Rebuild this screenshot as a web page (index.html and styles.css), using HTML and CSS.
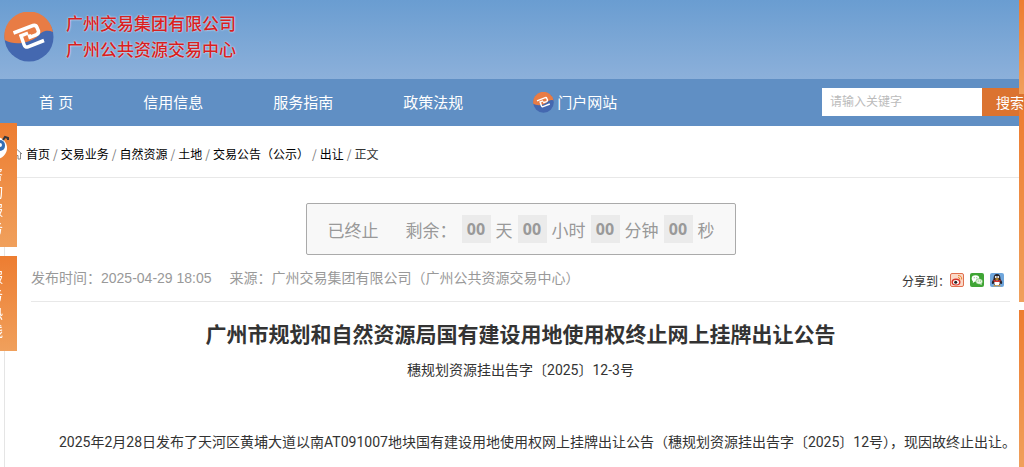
FILE: index.html
```html
<!DOCTYPE html>
<html lang="zh-CN">
<head>
  <meta charset="UTF-8">
  <meta name="viewport" content="width=device-width, initial-scale=1.0">
  <title>广州公共资源交易中心</title>
  <link rel="stylesheet" href="styles.css">
</head>
<body>
  <svg class="sprite" aria-hidden="true">
    <symbol id="logo" viewBox="0 0 50 50">
      <circle cx="25" cy="25" r="24.5" fill="#4468b0"/>
      <path d="M.6 28A24.5 24.5 0 0 1 49 20C42 17 37 20 33 25 25 31 11 34 .6 28Z" fill="#e87c45"/>
      <path d="M9.500 21L29 13.500Q32 12.800 33 15.500L34.500 19Q35 21.500 32 22.800L26 25.200 25 22.500" fill="none" stroke="#fff" stroke-width="3.500"/>
      <path d="M24 21L17 23.800 20 32.500Q21 35.800 24 34.800L40 28.500" fill="none" stroke="#fff" stroke-width="3.500"/>
    </symbol>
  </svg>

  <header class="header">
    <svg class="logo"><use href="#logo"/></svg>
    <div class="logo-text">
      <div>广州交易集团有限公司</div>
      <div>广州公共资源交易中心</div>
    </div>
  </header>

  <nav class="nav">
    <a href="#">首 页</a>
    <a href="#">信用信息</a>
    <a href="#">服务指南</a>
    <a href="#">政策法规</a>
    <a href="#"><svg class="nav-logo"><use href="#logo"/></svg>门户网站</a>
    <form class="search">
      <input type="text" placeholder="请输入关键字" aria-label="请输入关键字">
      <button type="button">搜索</button>
    </form>
  </nav>

  <main class="main">
    <div class="crumbs">
      <svg class="home" viewBox="0 0 12 12"><path d="M1 6L6 1.500 11 6M2.500 5V11H5V7.500H7V11H9.500V5" fill="none" stroke="#888"/></svg>
      <a href="#">首页</a> / <a href="#">交易业务</a> / <a href="#">自然资源</a> / <a href="#">土地</a> / <a href="#">交易公告（公示）</a> / <a href="#">出让</a> / <span>正文</span>
    </div>

    <article class="article">
      <div class="countdown">
        <span class="state">已终止</span>
        <span>剩余：</span>
        <b>00</b> 天 <b>00</b> 小时 <b>00</b> 分钟 <b>00</b> 秒
      </div>

      <div class="meta">
        <span>发布时间：2025-04-29 18:05</span>
        <span>来源：广州交易集团有限公司（广州公共资源交易中心）</span>
        <div class="share">
          <span>分享到：</span>
          <a href="#" aria-label="微博"><svg viewBox="0 0 14 14">
            <rect x=".5" y=".5" width="13" height="13" rx="1.500" fill="#fbd9c8" stroke="#e0704f"/>
            <ellipse cx="6" cy="9" rx="4.500" ry="3.500" fill="#d8342b"/>
            <ellipse cx="6" cy="9.200" rx="3" ry="2.200" fill="#fff"/>
            <circle cx="5.700" cy="9.300" r="1.500" fill="#222"/>
            <path d="M8 2.500Q12 2.500 11.700 6.500M8 4.500Q10 4.500 9.800 6.500" fill="none" stroke="#e8822b"/>
          </svg></a>
          <a href="#" aria-label="微信"><svg viewBox="0 0 14 14">
            <rect width="14" height="14" rx="2" fill="#3fa535"/>
            <ellipse cx="5.500" cy="5.500" rx="3.800" ry="3.200" fill="#fff"/>
            <path d="M3 7.500L2.800 10 5 8.500Z" fill="#fff"/>
            <ellipse cx="9.200" cy="8.500" rx="3.400" ry="2.800" fill="#e9f7e4" stroke="#3fa535" stroke-width=".5"/>
            <path d="M10 11L11.500 12.200V10Z" fill="#e9f7e4"/>
            <g fill="#3fa535"><circle cx="4.200" cy="4.800" r=".5"/><circle cx="6.800" cy="4.800" r=".5"/><circle cx="8.200" cy="8" r=".5"/><circle cx="10.300" cy="8" r=".5"/></g>
          </svg></a>
          <a href="#" aria-label="QQ"><svg viewBox="0 0 14 14">
            <rect width="14" height="14" rx="2" fill="#6fa6dc"/>
            <path d="M3.500 6Q3.500 1 7 1T10.500 6Q12.500 8.500 12 11L10.500 10.500 9.500 12.500H4.500L3.500 10.500 2 11Q1.500 8.500 3.500 6Z" fill="#26222a"/>
            <ellipse cx="7" cy="10" rx="2.700" ry="2.500" fill="#fff"/>
            <path d="M3.500 6.500Q7 9 10.500 6.500V8.200Q7 10 3.500 8.200Z" fill="#e2352b"/>
            <circle cx="5.800" cy="4" r="1" fill="#fff"/><circle cx="8.200" cy="4" r="1" fill="#fff"/>
            <ellipse cx="7" cy="6" rx="2" ry=".8" fill="#f5a623"/>
            <path d="M3.500 12.800H6.500M7.500 12.800H10.500" stroke="#f5a623"/>
          </svg></a>
        </div>
      </div>

      <h1>广州市规划和自然资源局国有建设用地使用权终止网上挂牌出让公告</h1>
      <p class="number">穗规划资源挂出告字〔2025〕12-3号</p>
      <p class="text">2025年2月28日发布了天河区黄埔大道以南AT091007地块国有建设用地使用权网上挂牌出让公告（穗规划资源挂出告字〔2025〕12号），现因故终止出让。</p>
    </article>
  </main>

  <!-- floating service tabs on both edges -->
  <aside class="side side-left">
    <a href="#" class="tab tab-robot">
      <svg viewBox="0 0 28 24">
        <circle cx="14" cy="13" r="11" fill="#fff"/>
        <rect x="7" y="5" width="16" height="11" rx="5" fill="#356fb5"/>
        <circle cx="18" cy="10" r="2" fill="#fff"/>
        <path d="M21 5L23 2 26 3V5" fill="none" stroke="#33373f" stroke-width="2"/>
      </svg>
      <span>咨询服务</span>
    </a>
    <a href="#" class="tab tab-phone"><span>服务热线</span></a>
  </aside>
  <aside class="side side-right">
    <a href="#" class="bar bar-top" aria-label="收藏"></a>
    <a href="#" class="bar bar-mid" aria-label="反馈"></a>
    <a href="#" class="bar bar-low" aria-label="帮助"></a>
  </aside>
</body>
</html>
```

FILE: styles.css
```css
* {
  box-sizing: border-box;
}
body {
  margin: 0;
  font-family: "Liberation Sans", "Noto Sans CJK SC", sans-serif;
  font-size: 14px;
  color: #333;
  background-color: #fff;
  overflow-x: hidden;
}
a {
  color: inherit;
  text-decoration: none;
}
svg {
  display: block;
}
.sprite {
  display: none;
}

/* header */
.header {
  display: flex;
  align-items: center;
  gap: 12px;
  height: 79px;
  padding: 0 4px 6px;
  background: linear-gradient(#6a9dd1, #8cb0da);
}
.logo {
  width: 50px;
  height: 50px;
}
.logo-text {
  padding-bottom: 1px;
  font-family: "Noto Sans CJK SC", sans-serif;
  font-size: 17px;
  line-height: 26px;
  font-weight: 500;
  color: #d8201f;
  text-shadow: 0 0 2px #fff;
}

/* nav */
.nav {
  display: flex;
  align-items: center;
  height: 47px;
  padding-left: 4px;
  background-color: #608fc4;
  color: #fff;
  font-size: 15px;
}
.nav a {
  display: flex;
  align-items: center;
  flex-shrink: 0;
  padding: 0 35px;
  line-height: 46px;
}
.nav-logo {
  width: 21px;
  height: 21px;
  margin-right: 3px;
}
.search {
  display: flex;
  flex-shrink: 0;
  height: 28px;
  margin: 0 -14px 2px auto;
}
.search input {
  width: 160px;
  padding: 0 8px;
  border: 0;
  font-family: inherit;
  font-size: 12px;
  background-color: #fff;
}
.search input::placeholder {
  color: #bbb;
}
.search button {
  width: 56px;
  padding: 0;
  border: 0;
  font-family: inherit;
  font-size: 14px;
  color: #fff;
  background-color: #db7330;
}

/* content */
.main {
  margin-left: 4px;
  border-left: 1px solid #e5e5e5;
}
.crumbs {
  display: flex;
  align-items: center;
  gap: 3px;
  height: 52px;
  padding: 4px 0 0 6px;
  border-bottom: 1px solid #e8e8e8;
  font-family: "Noto Sans CJK SC", sans-serif;
  font-size: 12px;
  color: #777;
}
.crumbs a {
  color: #000;
}
.crumbs span {
  color: #333;
}
.home {
  width: 12px;
  height: 12px;
}
.article {
  padding: 25px 14px 12px 26px;
}
.countdown {
  display: flex;
  align-items: center;
  gap: 5px;
  width: max-content;
  height: 52px;
  margin: 0 auto;
  padding: 0 20px 0 21px;
  border: 1px solid #aaa;
  border-radius: 2px;
  background-color: #f8f8f8;
  font-size: 17px;
  color: #999;
}
.countdown b {
  width: 29px;
  line-height: 28px;
  text-align: center;
  font-family: "Noto Sans", sans-serif;
  font-size: 16px;
  background-color: #ebebeb;
}
.state {
  margin-right: 22px;
}
.meta {
  display: flex;
  align-items: center;
  gap: 18px;
  height: 47px;
  padding-bottom: 2px;
  border-bottom: 1px solid #e8e8e8;
  color: #999;
}
.share {
  display: flex;
  align-items: center;
  gap: 6px;
  margin-left: auto;
  padding: 6px 6px 0 0;
  font-size: 12px;
  color: #333;
}
.share span {
  margin-right: -6px;
}
.share svg {
  width: 14px;
  height: 14px;
}
h1 {
  margin: 17px 0 0;
  font-size: 21px;
  line-height: 32px;
  font-weight: 700;
  text-align: center;
}
.number {
  margin: 6px 0 0;
  font-family: Roboto, "Noto Sans CJK SC", sans-serif;
  line-height: 26px;
  text-align: center;
}
.text {
  margin: 46px -14px 0 0;
  font-family: Roboto, "Noto Sans CJK SC", sans-serif;
  line-height: 26px;
  text-indent: 2em;
}

/* floating tabs */
.side {
  position: fixed;
  display: flex;
  flex-direction: column;
}
.side-left {
  top: 123px;
  left: -25px;
  gap: 9px;
}
.side-right {
  top: 0;
  right: 0;
  bottom: 0;
  width: 5px;
  overflow: hidden;
}
.tab {
  display: flex;
  flex-direction: column;
  align-items: center;
  width: 42px;
  line-height: 18px;
  color: #fff;
  background: linear-gradient(#ed7d31, #f0a05c);
}
.tab span {
  width: 14px;
}
.tab svg {
  width: 28px;
  height: 24px;
  margin-bottom: 6px;
}
.tab-robot {
  height: 124px;
  padding-top: 12px;
}
.tab-phone {
  height: 95px;
  padding-top: 12px;
}
.bar {
  background: linear-gradient(#ed7d31, #f0a05c);
}
.bar-top {
  height: 94px;
}
.bar-mid {
  height: 192px;
  margin: 16px 0 8px;
}
.bar-low {
  flex: 1;
}
```
